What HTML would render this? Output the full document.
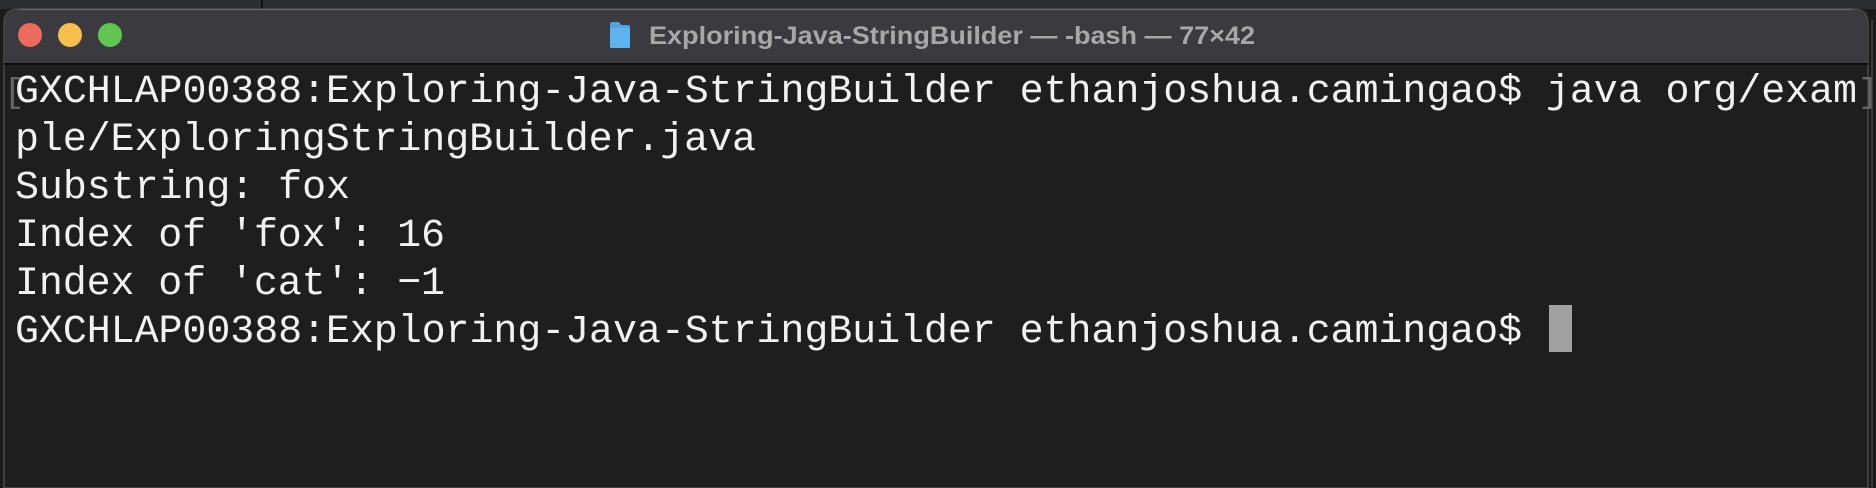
<!DOCTYPE html>
<html><head><meta charset="utf-8"><style>
html,body{margin:0;padding:0;background:#1e1e1e;width:1876px;height:488px;overflow:hidden}
svg{display:block}
</style></head><body>
<svg width="1876" height="488" viewBox="0 0 1876 488" xmlns="http://www.w3.org/2000/svg">
<rect x="0" y="0" width="1876" height="488" fill="#1c1c1e"/>
<rect x="0" y="0" width="1876" height="9" fill="#2c2d31"/>
<line x1="262" y1="0" x2="262" y2="9" stroke="#111" stroke-width="2"/>
<rect x="1868" y="9" width="8" height="479" fill="#1a1a1a"/>
<line x1="1872" y1="20" x2="1872" y2="488" stroke="#3a3a3a" stroke-width="2"/>
<!-- window -->
<path d="M4 488 V24 Q4 9 19 9 H1853 Q1868 9 1868 24 V488 Z" fill="#1e1e1e" stroke="#4a4a4c" stroke-width="1.5"/>
<path d="M4.8 63 V24 Q4.8 9.8 19 9.8 H1853 Q1867.2 9.8 1867.2 24 V63 Z" fill="#3b3b3f"/>
<line x1="4" y1="64" x2="1868" y2="64" stroke="#0e0e0e" stroke-width="2"/>
<line x1="19" y1="9.6" x2="1853" y2="9.6" stroke="#6a6a6c" stroke-width="1"/>
<circle cx="30" cy="35" r="12" fill="#ec6a5e"/>
<circle cx="70" cy="35" r="12" fill="#f4bf4f"/>
<circle cx="110" cy="35" r="12" fill="#61c554"/>
<!-- folder -->
<path d="M610 24 Q610 22 612 22 H619 L621 25 H628 Q630 25 630 27 V46 Q630 48 628 48 H612 Q610 48 610 46 Z" fill="#4da3e6"/>
<rect x="610" y="28" width="20" height="20" rx="1.5" fill="#5db3f0"/>
<text x="649" y="44" font-family="Liberation Sans, sans-serif" font-weight="bold" font-size="25" fill="#a7a7aa" textLength="606" lengthAdjust="spacingAndGlyphs">Exploring-Java-StringBuilder — -bash — 77×42</text>
<g font-family="Liberation Mono, monospace" font-size="40" fill="#f2f2f2" lengthAdjust="spacingAndGlyphs">
<text x="4" y="102" fill="#666" font-size="34">[</text>
<text x="1858" y="102" fill="#666" font-size="34">]</text>
<text x="15" y="102" textLength="1842">GXCHLAP00388:Exploring-Java-StringBuilder ethanjoshua.camingao$ java org/exam</text>
<text x="15" y="150" textLength="741">ple/ExploringStringBuilder.java</text>
<text x="15" y="198" textLength="335">Substring: fox</text>
<text x="15" y="246" textLength="430">Index of 'fox': 16</text>
<text x="15" y="294" textLength="430">Index of 'cat': −1</text>
<text x="15" y="342" textLength="1507">GXCHLAP00388:Exploring-Java-StringBuilder ethanjoshua.camingao$</text>
</g>
<rect x="1549" y="305" width="23" height="47" fill="#a0a0a0"/>
</svg>
</body></html>
